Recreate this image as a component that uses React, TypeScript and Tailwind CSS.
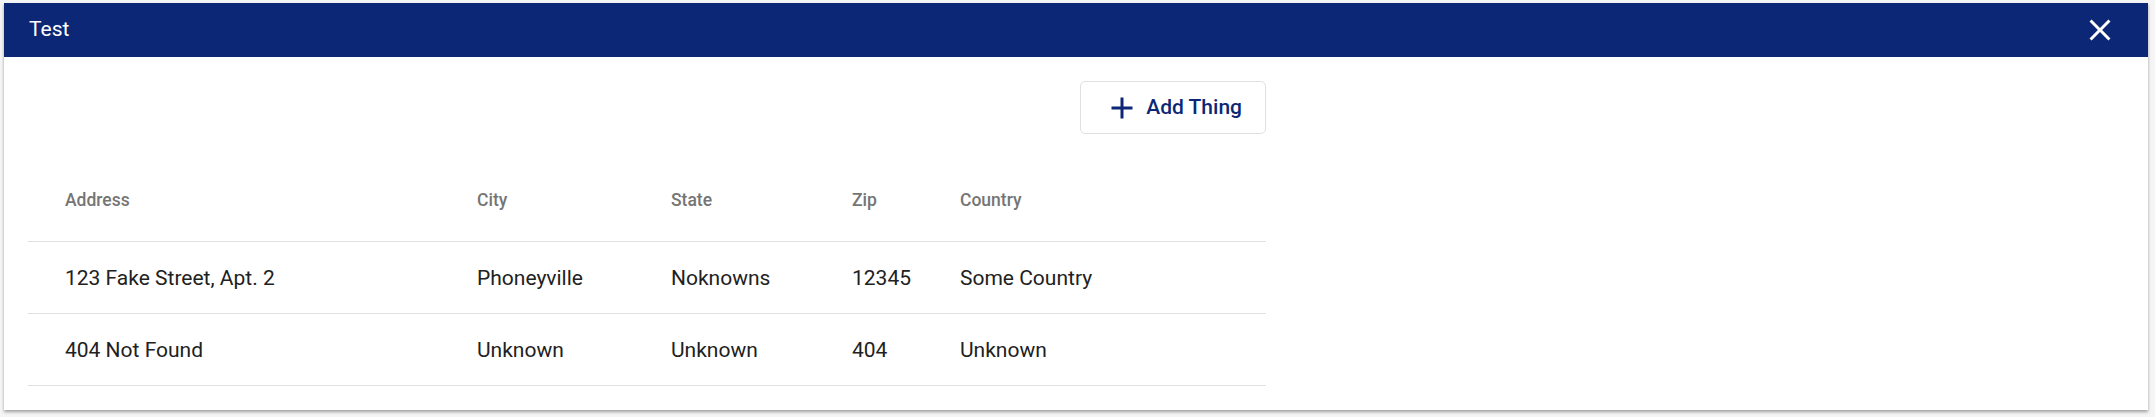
import React from 'react';

type Row = {
  address: string;
  city: string;
  state: string;
  zip: string;
  country: string;
};

const rows: Row[] = [
  { address: '123 Fake Street, Apt. 2', city: 'Phoneyville', state: 'Noknowns', zip: '12345', country: 'Some Country' },
  { address: '404 Not Found', city: 'Unknown', state: 'Unknown', zip: '404', country: 'Unknown' },
];

const columns = ['Address', 'City', 'State', 'Zip', 'Country'];

const gridCols = 'grid grid-cols-[412px_194px_181px_108px_1fr] pl-[37px]';

const CloseIcon: React.FC = () => (
  <svg width="36" height="36" viewBox="0 0 24 24" fill="currentColor">
    <path d="M19 6.41L17.59 5 12 10.59 6.41 5 5 6.41 10.59 12 5 17.59 6.41 19 12 13.41 17.59 19 19 17.59 13.41 12z" />
  </svg>
);

const AddIcon: React.FC = () => (
  <svg width="36" height="36" viewBox="0 0 24 24" fill="currentColor">
    <path d="M19 13h-6v6h-2v-6H5v-2h6V5h2v6h6v2z" />
  </svg>
);

const App: React.FC = () => {
  return (
    <div className="h-[417px] overflow-hidden bg-[#f5f5f5] pt-[3px] pl-[4px] font-['Roboto',sans-serif]">
      <div className="w-[2144px] bg-white shadow-[0_2px_3px_rgba(0,0,0,0.35)]">
        {/* Title bar */}
        <div className="flex h-[54px] items-center justify-between bg-[#0c2775] pl-[25px] pr-[30px] text-white">
          <span className="text-[21px]">Test</span>
          <button className="flex items-center text-white">
            <CloseIcon />
          </button>
        </div>

        <div className="px-[24px] pt-[24px] pb-[24px]">
          <div className="w-[1238px]">
            <div className="flex justify-end">
              <button className="flex h-[53px] items-center gap-[6px] rounded-[5px] border border-[#e0e0e0] bg-white pl-[23px] pr-[23px] text-[21px] font-medium text-[#0c2775]">
                <AddIcon />
                <span>Add Thing</span>
              </button>
            </div>

            <div className="mt-[24px]">
              <div className={`${gridCols} h-[84px] items-center border-b border-[#e0e0e0] text-[17.5px] font-medium leading-6 text-[#757575]`}>
                {columns.map((c) => (
                  <div key={c}>{c}</div>
                ))}
              </div>
              {rows.map((r) => (
                <div
                  key={r.address}
                  className={`${gridCols} h-[72px] items-center border-b border-[#e0e0e0] text-[21px] leading-6 text-[#212121]`}
                >
                  <div>{r.address}</div>
                  <div>{r.city}</div>
                  <div>{r.state}</div>
                  <div>{r.zip}</div>
                  <div>{r.country}</div>
                </div>
              ))}
            </div>
          </div>
        </div>
      </div>
    </div>
  );
};

export default App;
